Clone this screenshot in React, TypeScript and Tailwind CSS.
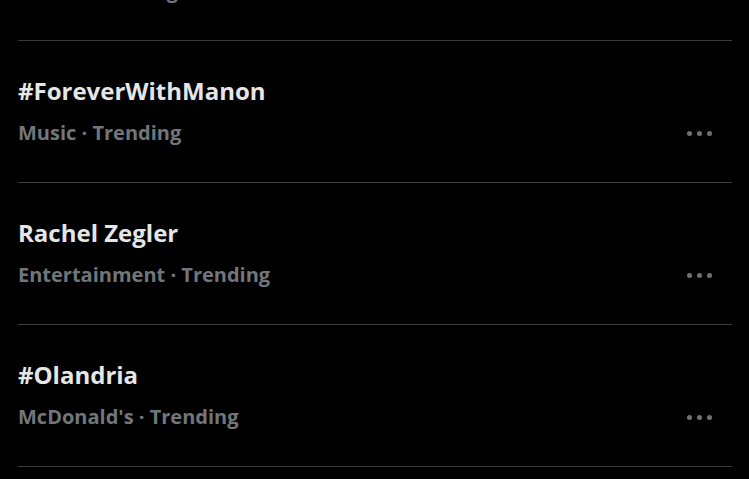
import React from "react";

type Trend = { title: string; category: string };

const trends: Trend[] = [
  { title: "#TrendingNow", category: "News" },
  { title: "#ForeverWithManon", category: "Music" },
  { title: "Rachel Zegler", category: "Entertainment" },
  { title: "#Olandria", category: "McDonald's" },
  { title: "#Next", category: "Sports" },
];

function MoreDots() {
  return (
    <div className="flex items-center gap-[5px] mr-[20px]">
      <span className="w-[5px] h-[5px] rounded-full bg-[#6e7275]" />
      <span className="w-[5px] h-[5px] rounded-full bg-[#6e7275]" />
      <span className="w-[5px] h-[5px] rounded-full bg-[#6e7275]" />
    </div>
  );
}

function TrendRow({ trend }: { trend: Trend }) {
  return (
    <div className="border-b border-[#3a3b3c] pt-[34px] pb-[35px]">
      <div className="text-[24px] leading-[32px] font-bold text-[#e4e6e7]">
        {trend.title}
      </div>
      <div className="mt-[12px] flex items-center justify-between h-[28px]">
        <span className="text-[20px] leading-[28px] font-bold text-[#71767b]">
          {trend.category} · Trending
        </span>
        <MoreDots />
      </div>
    </div>
  );
}

export default function App() {
  return (
    <div
      className="w-[749px] h-[479px] bg-black overflow-hidden"
      style={{ fontFamily: '"Open Sans", "Noto Sans", sans-serif' }}
    >
      <div className="pl-[18px] pr-[17px] -mt-[101px]">
        {trends.map((t) => (
          <TrendRow key={t.title} trend={t} />
        ))}
      </div>
    </div>
  );
}
